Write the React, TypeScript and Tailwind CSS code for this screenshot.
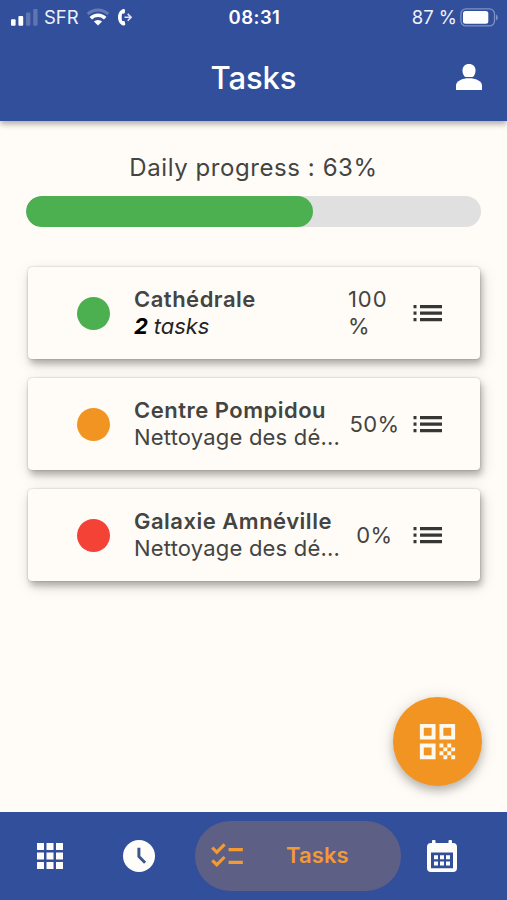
import { JSX } from 'react';
import { MdChecklist, MdQrCode } from 'react-icons/md';

interface Site {
  name: string;
  color: string;
  progress: string;
  detail?: string;
  taskCount?: number;
}

const DAILY_PROGRESS = 63;

const sites: Site[] = [
  { name: 'Cathédrale', color: 'bg-[#4caf50]', progress: '100 %', taskCount: 2 },
  { name: 'Centre Pompidou', color: 'bg-[#f29422]', progress: '50%', detail: 'Nettoyage des dé...' },
  { name: 'Galaxie Amnéville', color: 'bg-[#f44336]', progress: '0%', detail: 'Nettoyage des dé...' },
];

const StatusBar = (): JSX.Element => (
  <div className="flex h-[34px] items-center text-[18.5px] leading-none text-[#eef1fa]">
    <div className="flex flex-1 items-center pl-[11px]">
      <svg className="h-[17px] w-[27px]" viewBox="0 0 27 17" fill="#fff">
        <rect x="0" y="10.3" width="4.6" height="6.4" rx="1" />
        <rect x="7.4" y="7" width="4.8" height="9.7" rx="1" />
        <rect x="15" y="3.5" width="4.4" height="13.2" rx="1" opacity=".22" />
        <rect x="22.2" y="0" width="4.4" height="16.7" rx="1" opacity=".22" />
      </svg>
      <span className="ml-[6px] w-[36px]">SFR</span>
      <svg className="ml-[6px] h-[18px] w-[24px]" viewBox="0 0 24 18" fill="none" strokeWidth="3.2">
        <path d="M1.8 6.1a14.8 14.8 0 0 1 20.4 0" stroke="#fff" opacity=".25" />
        <path d="M4.8 10.2a10.2 10.2 0 0 1 14.4 0" stroke="#fff" strokeWidth="3.6" />
        <path d="M12 17.5l-4.1-3.900a5.800 5.800 0 0 1 8.200 0z" fill="#fff" />
      </svg>
      <svg className="ml-[8px] h-[17px] w-[15px]" viewBox="0 0 15 17">
        <path
          d="M4.8.2C1.8 1.2 0 4.5 0 8.3s2 7.2 5 8.2c.8.3 2.3-.4 2.3-1.1l-.4-2.5c-.2-.8-1-1.1-2.5-.8-.6-1-.7-2.200-.7-3.700s.1-2.700.7-3.800c1.500.3 2.200 0 2.400-.8L7.100 1.300C7.100.5 5.600-.1 4.800.2z"
          fill="#fff"
        />
        <path d="M6.500 8.300h6.200M9.700 4.900l3.400 3.400-3.400 3.400" fill="none" stroke="#dfe4f3" strokeWidth="1.600" />
      </svg>
    </div>
    <span className="font-semibold tracking-[0.45px] text-white">08:31</span>
    <div className="flex flex-1 items-center justify-end pr-[9px]">
      <span>87 %</span>
      <svg className="ml-[3px] h-[19px] w-[38px]" viewBox="0 0 38 19">
        <rect x=".9" y=".9" width="33.6" height="17" rx="5" fill="none" stroke="#8091c4" strokeWidth="1.3" />
        <rect x="3" y="3" width="25.3" height="12.8" rx="2.5" fill="#fff" />
        <path d="M36 6.5c2.300 1 2.300 5 0 6z" fill="#8091c4" />
      </svg>
    </div>
  </div>
);

const ListIcon = (): JSX.Element => (
  <svg className="h-[18px] w-[29px]" viewBox="0 0 29 18" fill="#363634">
    <path d="M.5 1h3v3.200h-3zM7 1h22v3.200H7zM.5 7.500h3v3.200h-3zM7 7.500h22v3.200H7zM.5 14h3v3.200h-3zM7 14h22v3.200H7z" />
  </svg>
);

const SiteCard = ({ site }: { site: Site }): JSX.Element => (
  <div className="flex h-[92px] items-center rounded-[4px] bg-[#fffcf7] pl-[49px] shadow-[0_0_2px_rgba(0,0,0,0.25),2px_5px_6px_rgba(0,0,0,0.24),2px_5px_16px_rgba(0,0,0,0.13)]">
    <div className={`size-[33px] shrink-0 rounded-full ${site.color}`} />
    <div className="ml-[24px] w-[209px] shrink-0 whitespace-nowrap">
      <p className="font-semibold tracking-[0.5px]">{site.name}</p>
      {site.taskCount ? (
        <p className="tracking-[-0.1px] text-[#242424] italic">
          <b className="font-bold text-black">{site.taskCount}</b> tasks
        </p>
      ) : (
        <p className="tracking-[0.2px]">{site.detail}</p>
      )}
    </div>
    {site.progress.length > 4 ? (
      <p className="ml-[5px] w-[53px] shrink-0 tracking-[0.9px]">{site.progress}</p>
    ) : (
      <p className="ml-[5px] w-[53px] shrink-0 text-center tracking-[0.4px]">{site.progress}</p>
    )}
    <button className="ml-[12px]" aria-label="Details">
      <ListIcon />
    </button>
  </div>
);

const BottomNav = (): JSX.Element => (
  <nav className="flex h-[88.5px] shrink-0 items-center bg-[#324f9b] text-[#fffdf9]">
    <button className="ml-[37px]" aria-label="Home">
      <svg className="size-[26px]" viewBox="0 0 26 26" fill="currentColor">
        <path d="M0 0h7v7H0zM9.500 0h7v7h-7zM19 0h7v7h-7zM0 9.500h7v7H0zM9.500 9.500h7v7h-7zM19 9.500h7v7h-7zM0 19h7v7H0zM9.500 19h7v7h-7zM19 19h7v7h-7z" />
      </svg>
    </button>
    <button className="ml-[59.5px]" aria-label="Hours">
      <svg className="size-[32px]" viewBox="0 0 32 32" fill="none">
        <circle cx="16" cy="16" r="16" fill="currentColor" />
        <path d="M15.900 7.700v8.800l6.200 6.300" stroke="#3c568f" strokeWidth="3" />
      </svg>
    </button>
    <button className="ml-[40.5px] flex h-[70px] w-[206px] items-center rounded-full bg-[#5e5f85] text-[#f29a35]">
      <MdChecklist className="ml-[13px] size-[38px]" />
      <span className="ml-[40px] text-[22px] font-semibold tracking-[0.1px]">Tasks</span>
    </button>
    <button className="ml-[26px]" aria-label="Calendar">
      <svg className="h-[32px] w-[30px]" viewBox="0 0 30 32" fill="currentColor" fillRule="evenodd">
        <path d="M5 1a1 1 0 0 1 1-1h1.500a1 1 0 0 1 1 1v2h13V1a1 1 0 0 1 1-1H24a1 1 0 0 1 1 1v2h1a4 4 0 0 1 4 4v21a4 4 0 0 1-4 4H4a4 4 0 0 1-4-4V7a4 4 0 0 1 4-4h1zM4 12.500V28.300h22V12.500z" />
        <path d="M7 15.300h4v4H7zM13 15.300h4v4h-4zM19 15.300h4v4h-4zM7 21.600h4v4H7zM13 21.600h4v4h-4zM19 21.600h4v4h-4z" />
      </svg>
    </button>
  </nav>
);

export const App = (): JSX.Element => {
  return (
    <div className="relative flex h-[900px] w-full flex-col overflow-hidden bg-[#fffcf7] font-['Inter','Liberation_Sans',sans-serif] text-[#444442]">
      <header className="h-[121px] shrink-0 bg-[#324f9b] text-white shadow-[0_3px_6px_rgba(0,0,0,0.32)]">
        <StatusBar />
        <div className="grid h-[86px] grid-cols-[1fr_auto_1fr] items-center">
          <h1 className="col-start-2 text-[31px] leading-none font-medium tracking-[-0.1px]">Tasks</h1>
          <button className="mr-[25px] justify-self-end" aria-label="Profile">
            <svg className="h-[26px] w-[26px]" viewBox="0 0 26 26" fill="currentColor">
              <path d="M13 0c4 0 6.5 2.6 6.5 6.3 0 3.2-1.2 6.2-3.2 6.700H9.700c-2-.5-3.200-3.500-3.200-6.700C6.500 2.600 9 0 13 0z" />
              <path d="M0 26v-4.500C0 17 6.500 14.300 13 14.300S26 17 26 21.500V26z" />
            </svg>
          </button>
        </div>
      </header>

      <main className="flex-1 px-[26px] pt-[32px]">
        <p className="text-center text-[24px] leading-[30px] tracking-[0.57px]">
          Daily progress : {DAILY_PROGRESS}%
        </p>
        <div className="mt-[13px] h-[31px] overflow-hidden rounded-full bg-[#e0e0e0]">
          <div className="h-full rounded-full bg-[#4caf50]" style={{ width: `${DAILY_PROGRESS}%` }} />
        </div>
        <div className="mt-[40px] flex flex-col gap-[19px] pr-px pl-[2px] text-[22px] leading-[27px]">
          {sites.map((site) => (
            <SiteCard key={site.name} site={site} />
          ))}
        </div>
      </main>

      {/* Floating scan button */}
      <button
        className="absolute right-[25px] bottom-[114px] flex size-[89px] items-center justify-center rounded-full bg-[#f29422] text-[#fff8ec] shadow-[0_5px_8px_rgba(0,0,0,0.22),0_2px_18px_rgba(0,0,0,0.12)]"
        aria-label="Scan"
      >
        <MdQrCode className="size-[47px]" />
      </button>

      <BottomNav />
    </div>
  );
};

export default App;
